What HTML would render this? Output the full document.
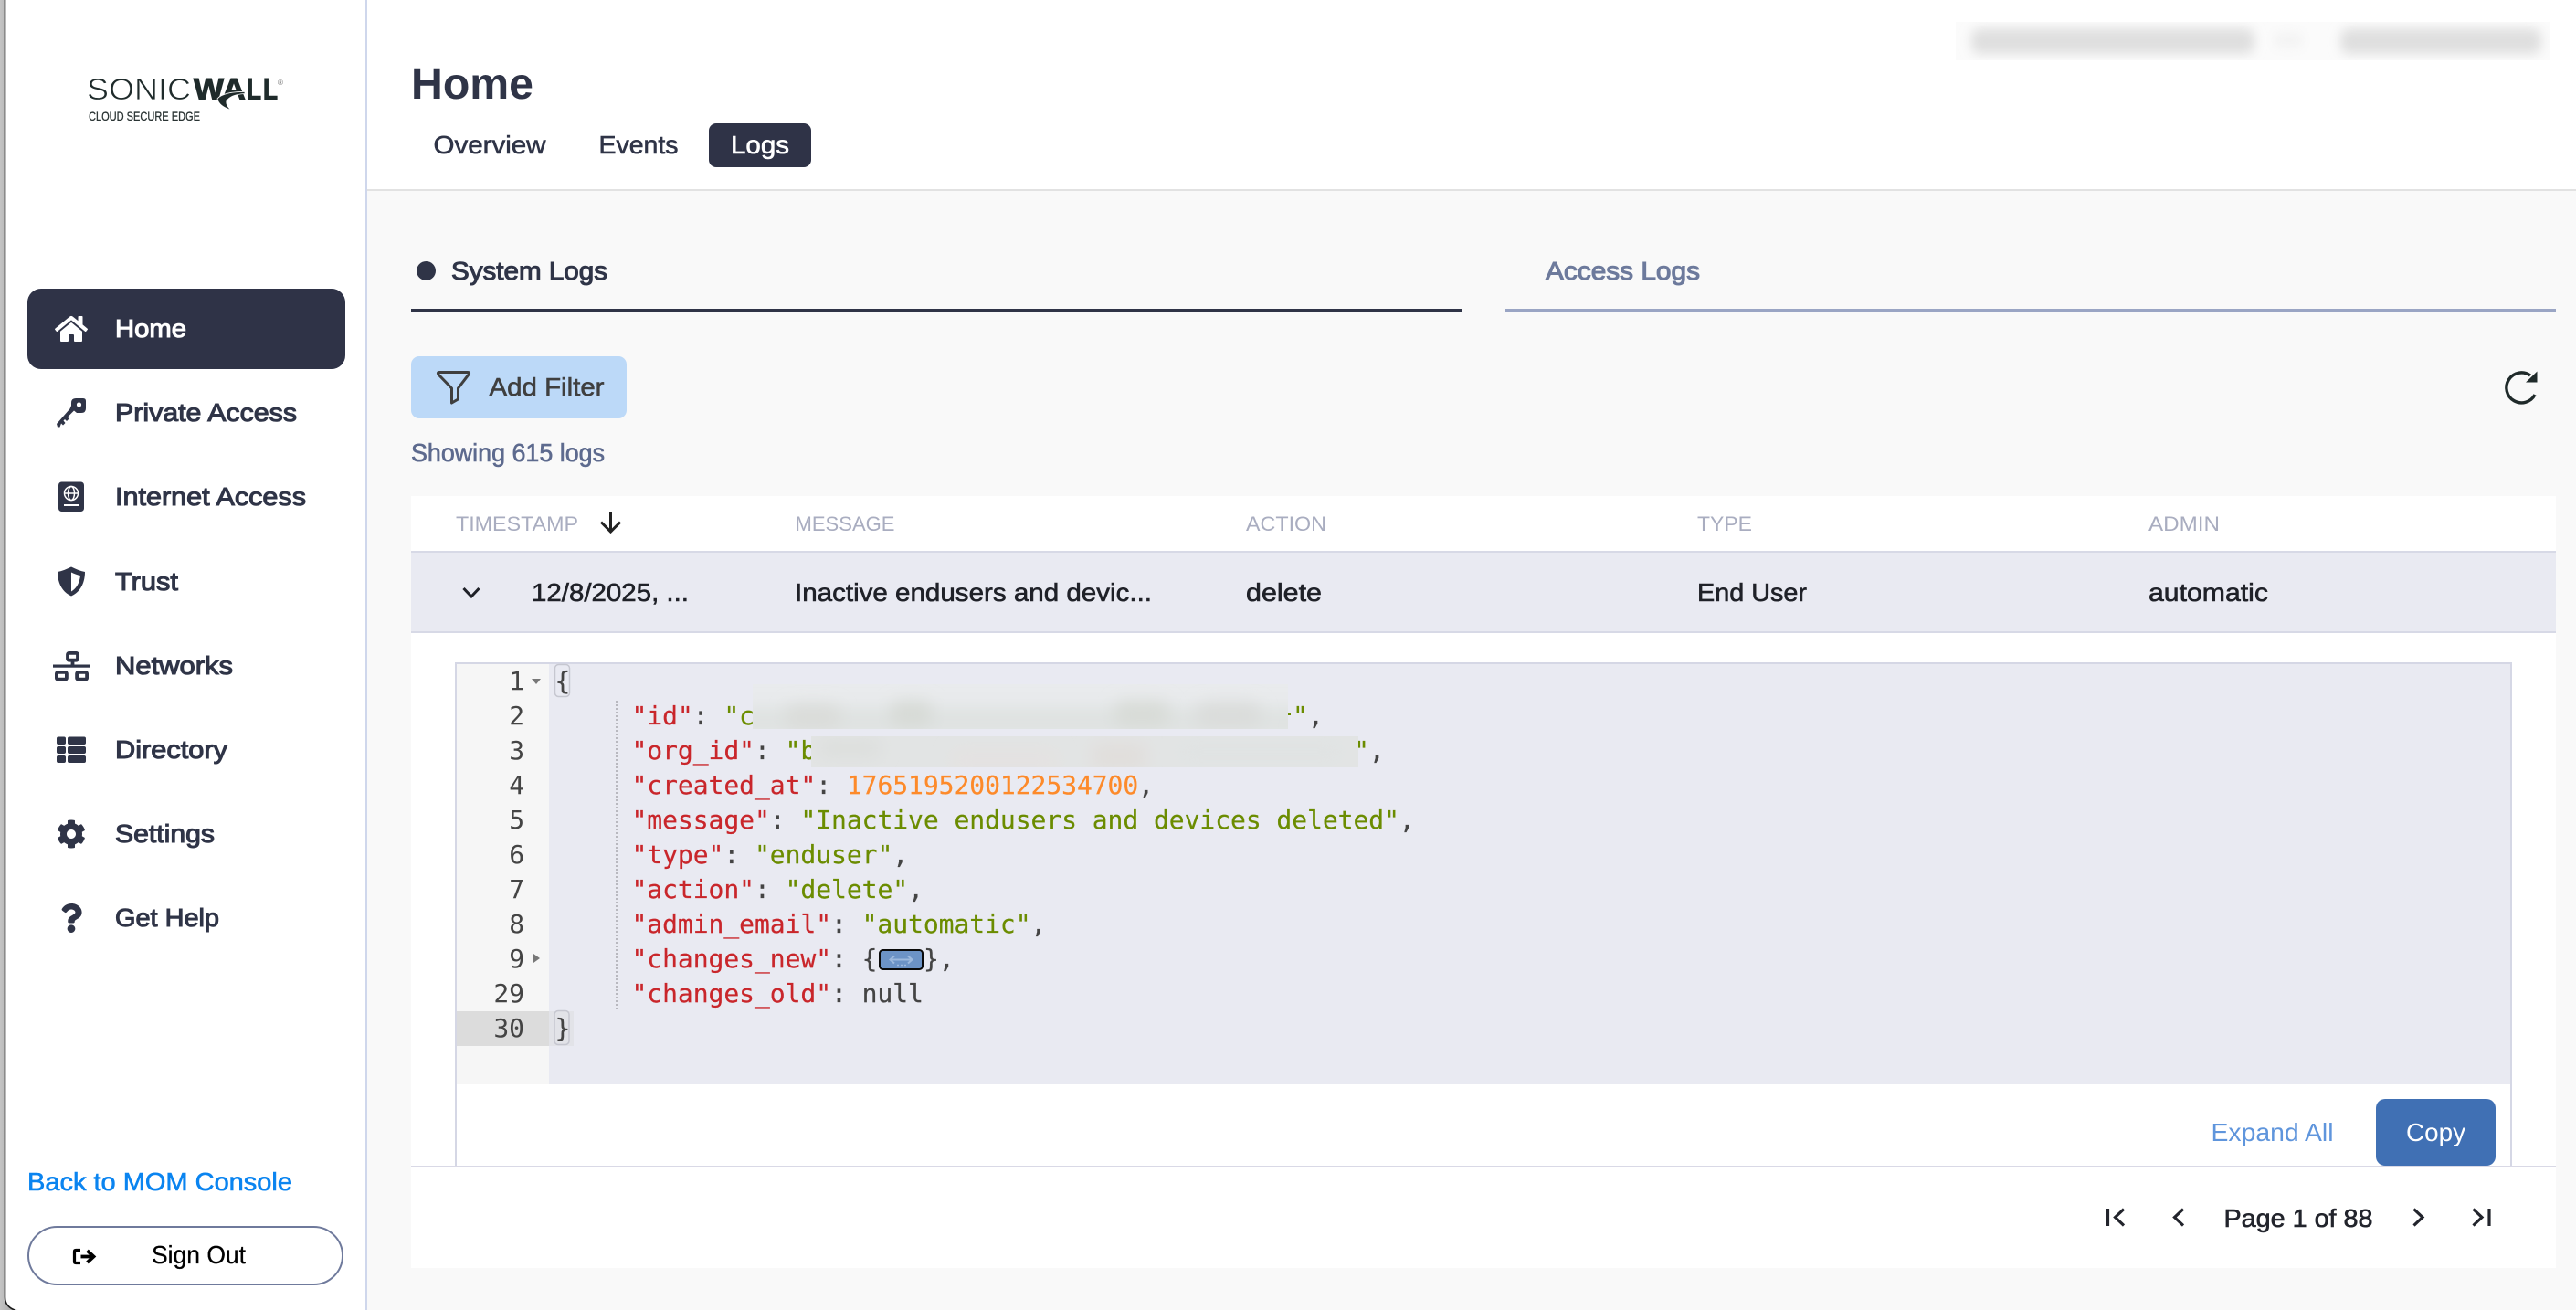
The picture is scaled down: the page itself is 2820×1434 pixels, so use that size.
<!DOCTYPE html>
<html lang="en">
<head>
<meta charset="utf-8">
<title>Home - Logs</title>
<style>
html,body{margin:0;padding:0;background:#f9f9f9;width:2820px;height:1434px;overflow:hidden}
svg{display:block}
text{font-family:"Liberation Sans",Arial,sans-serif;white-space:pre}
.m{stroke-width:.6px;paint-order:stroke}
.s{stroke-width:1.05px;paint-order:stroke}
.nav{font-size:28px;fill:#2f3447;stroke:#2f3447}
.cell{font-size:28px;fill:#1f2128;stroke:#1f2128}
.th{font-size:22px;fill:#a9adc0}
.code text,text.code{font-family:"DejaVu Sans Mono","Liberation Mono",monospace;font-size:28px;letter-spacing:-.05px}
.p{fill:#444;stroke:#444;stroke-width:.2px}
.k{fill:#c9262b;stroke:#c9262b;stroke-width:.2px}
.g{fill:#6b8c00;stroke:#6b8c00;stroke-width:.2px}
.n{fill:#fd8a2a;stroke:#fd8a2a;stroke-width:.2px}
.ln{fill:#444;text-anchor:end}
</style>
</head>
<body>
<svg xmlns="http://www.w3.org/2000/svg" width="2820" height="1434" viewBox="0 0 2820 1434">
<defs>
<filter id="b6" x="-30%" y="-150%" width="160%" height="400%"><feGaussianBlur stdDeviation="6"/></filter>
<filter id="b9" x="-30%" y="-150%" width="160%" height="400%"><feGaussianBlur stdDeviation="9"/></filter>
<linearGradient id="band" x1="0" x2="1" y1="0" y2="0"><stop offset="0" stop-color="#c4c4c4"/><stop offset="1" stop-color="#9e9e9e"/></linearGradient>
</defs>

<!-- page background -->
<rect width="2820" height="1434" fill="#f9f9f9"/>
<!-- header -->
<rect x="402" y="0" width="2418" height="207" fill="#fff"/>
<rect x="402" y="207" width="2418" height="2" fill="#e2e2e2"/>

<!-- sidebar -->
<rect x="0" y="0" width="20" height="1434" fill="url(#band)"/>
<path d="M6 0V1420Q6 1434 20 1434H400V0Z" fill="#fff"/>
<path d="M5.500 0V1420Q5.500 1430 16 1434" fill="none" stroke="#1a1a1a" stroke-width="1.600"/>
<rect x="400" y="0" width="2" height="1434" fill="#cfd7ec"/>

<!-- logo -->
<text x="95" y="109" font-size="33" fill="#1f2b2b" stroke="#fff" stroke-width=".7" textLength="114" lengthAdjust="spacingAndGlyphs">SONIC</text>
<g font-size="33" font-weight="700" fill="#1f2b2b" stroke="#1f2b2b" stroke-width="1.100">
<text x="212" y="109" textLength="33" lengthAdjust="spacingAndGlyphs">W</text>
<text x="243" y="109" textLength="26" lengthAdjust="spacingAndGlyphs">A</text>
<text x="270" y="109" textLength="16" lengthAdjust="spacingAndGlyphs">L</text>
<text x="288" y="109" textLength="16" lengthAdjust="spacingAndGlyphs">L</text>
</g>
<path d="M238 108C242 103 254 100 268 100.500V102.500C258 103 251 106 248 110.500C247 114 249 117 253 120.500C245 118 239 114 238 108Z" fill="#1f2b2b" stroke="#fff" stroke-width=".8"/>
<text x="304" y="93" font-size="8" fill="#666">®</text>
<text x="97" y="132" font-size="14" fill="#2a3333" stroke="#2a3333" stroke-width=".3" textLength="122" lengthAdjust="spacingAndGlyphs">CLOUD SECURE EDGE</text>

<!-- nav -->
<rect x="30" y="316" width="348" height="88" rx="15" fill="#2f3347"/>
<path transform="translate(60 344) scale(.0625)" fill="#fff" d="M280.37 148.26L96 300.11V464a16 16 0 0 0 16 16l112.06-.29a16 16 0 0 0 15.92-16V368a16 16 0 0 1 16-16h64a16 16 0 0 1 16 16v95.64a16 16 0 0 0 16 16.05L464 480a16 16 0 0 0 16-16V300L295.67 148.26a12.19 12.19 0 0 0-15.3 0zM571.6 251.47L488 182.56V44.05a12 12 0 0 0-12-12h-56a12 12 0 0 0-12 12v72.61L318.47 43a48 48 0 0 0-61 0L4.34 251.47a12 12 0 0 0-1.6 16.9l25.5 31A12 12 0 0 0 45.15 301l235.22-193.74a12.19 12.19 0 0 1 15.3 0L530.9 301a12 12 0 0 0 16.9-1.6l25.5-31a12 12 0 0 0-1.7-16.93z"/>
<text x="126" y="369" class="s" font-size="28" fill="#fff" stroke="#fff" textLength="78" lengthAdjust="spacingAndGlyphs">Home</text>

<path fill="#2f3447" d="M83 436H91Q94 436 94 439V447Q94 452 89 452H84L81 449.500L74 456.500L75.500 458.500L73 461L71 459L69.500 460.500L71.500 463L69 465.500L67 463.500L65.500 467.500H63L62 464L76.500 447.500L78 444V441Q78 436 83 436Z"/>
<circle cx="86.500" cy="443" r="2.600" fill="#fff"/>
<text x="126" y="461" class="nav s" textLength="199" lengthAdjust="spacingAndGlyphs">Private Access</text>

<rect x="64" y="527.500" width="28" height="32.500" rx="3.500" fill="#2f3447"/>
<g fill="none" stroke="#fff" stroke-width="1.500"><circle cx="78" cy="540" r="7.500"/><ellipse cx="78" cy="540" rx="3.500" ry="7.500"/><path d="M70.500 540H85.500"/></g>
<rect x="70" y="552" width="16" height="2" fill="#fff"/>
<text x="126" y="553" class="nav s" textLength="209" lengthAdjust="spacingAndGlyphs">Internet Access</text>

<path fill="#2f3447" d="M78 620.500C83 623 88 625 93 626C93 638 88 648 78 652.500C68 648 63 638 63 626C68 625 73 623 78 620.500Z"/>
<path fill="#fff" d="M78 626.500C81 628 85 629.500 88 630C87 638 84 644 78 647.500Z"/>
<text x="126" y="646" class="nav s" textLength="69" lengthAdjust="spacingAndGlyphs">Trust</text>

<g fill="none" stroke="#2f3447" stroke-width="3.800">
<rect x="74" y="714.900" width="11" height="7.800" rx="1.500"/>
<path d="M79.500 723V728"/>
<rect x="61.900" y="735.900" width="11" height="7.800" rx="1.500"/>
<rect x="84.100" y="735.900" width="11" height="7.800" rx="1.500"/>
</g>
<rect x="58" y="727.500" width="40" height="3.200" fill="#2f3447"/>
<text x="126" y="738" class="nav s" textLength="129" lengthAdjust="spacingAndGlyphs">Networks</text>

<g fill="#2f3447">
<rect x="62" y="806.500" width="10" height="8.500" rx="2"/><rect x="62" y="817" width="10" height="8" rx="2"/><rect x="62" y="827" width="10" height="8" rx="2"/>
<rect x="74" y="806.500" width="20" height="8.500" rx="2"/><rect x="74" y="817" width="20" height="8" rx="2"/><rect x="74" y="827" width="20" height="8" rx="2"/>
</g>
<text x="126" y="830" class="nav s" textLength="123" lengthAdjust="spacingAndGlyphs">Directory</text>

<path transform="translate(62 897) scale(.0625)" fill="#2f3447" d="M487.4 315.7l-42.6-24.6c4.3-23.2 4.3-47 0-70.2l42.6-24.6c4.9-2.8 7.1-8.6 5.5-14-11.1-35.6-30-67.8-54.7-94.6-3.8-4.1-10-5.1-14.8-2.3L380.8 110c-17.9-15.4-38.5-27.3-60.8-35.1V25.8c0-5.6-3.9-10.5-9.4-11.7-36.7-8.2-74.3-7.8-109.2 0-5.5 1.2-9.4 6.1-9.4 11.7V75c-22.2 7.9-42.8 19.8-60.8 35.1L88.700 85.500c-4.900-2.800-11-1.900-14.800 2.300-24.700 26.700-43.600 58.900-54.700 94.600-1.700 5.400.6 11.200 5.500 14L67.300 221c-4.300 23.200-4.300 47 0 70.200l-42.600 24.600c-4.900 2.800-7.100 8.600-5.500 14 11.100 35.600 30 67.800 54.700 94.600 3.800 4.100 10 5.100 14.800 2.300l42.600-24.600c17.900 15.400 38.500 27.300 60.800 35.100v49.200c0 5.600 3.900 10.500 9.400 11.700 36.700 8.200 74.300 7.800 109.200 0 5.500-1.200 9.400-6.100 9.400-11.700v-49.200c22.200-7.900 42.800-19.800 60.800-35.100l42.600 24.600c4.900 2.800 11 1.900 14.800-2.300 24.700-26.700 43.600-58.900 54.700-94.600 1.500-5.500-.7-11.300-5.600-14.100zM256 336c-44.100 0-80-35.900-80-80s35.900-80 80-80 80 35.900 80 80-35.900 80-80 80z"/>
<text x="126" y="922" class="nav s" textLength="109" lengthAdjust="spacingAndGlyphs">Settings</text>

<path transform="translate(66 989) scale(.0625)" fill="#2f3447" d="M202.021 0C122.202 0 70.503 32.703 29.914 91.026c-7.363 10.58-5.093 25.086 5.178 32.874l43.138 32.709c10.373 7.865 25.132 6.026 33.253-4.148 25.049-31.381 43.63-49.449 82.757-49.449 30.764 0 68.816 19.799 68.816 49.631 0 22.552-18.617 34.134-48.993 51.164-35.423 19.86-82.299 44.576-82.299 106.405V320c0 13.255 10.745 24 24 24h72.471c13.255 0 24-10.745 24-24v-5.773c0-42.86 125.268-44.645 125.268-160.627C377.504 66.256 286.902 0 202.021 0zM192 373.459c-38.196 0-69.271 31.075-69.271 69.271 0 38.195 31.075 69.27 69.271 69.27s69.271-31.075 69.271-69.271-31.075-69.27-69.271-69.27z"/>
<text x="126" y="1014" class="nav s" textLength="114" lengthAdjust="spacingAndGlyphs">Get Help</text>

<!-- sidebar bottom -->
<text x="30" y="1303" font-size="28" fill="#0a84f0" stroke="#0a84f0" class="m" textLength="290" lengthAdjust="spacingAndGlyphs">Back to MOM Console</text>
<rect x="31" y="1343" width="344" height="63" rx="31.500" fill="#fff" stroke="#6f7a9c" stroke-width="2"/>
<path d="M88 1368.500H83Q81.500 1368.500 81.500 1370V1381Q81.500 1382.500 83 1382.500H88" fill="none" stroke="#000" stroke-width="3.200"/>
<path d="M88.500 1375.500H101M95.500 1369L102.500 1375.500L95.500 1382" fill="none" stroke="#000" stroke-width="3.800"/>
<text x="166" y="1383" font-size="28" fill="#000" stroke="#000" stroke-width=".3" textLength="103" lengthAdjust="spacingAndGlyphs">Sign Out</text>

<!-- header content -->
<text x="450" y="108" font-size="48" font-weight="700" fill="#2f3447" textLength="134" lengthAdjust="spacingAndGlyphs">Home</text>
<text x="474.500" y="168" font-size="28" fill="#2f3447" stroke="#2f3447" class="m" textLength="123" lengthAdjust="spacingAndGlyphs">Overview</text>
<text x="655.500" y="168" font-size="28" fill="#2f3447" stroke="#2f3447" class="m" textLength="87" lengthAdjust="spacingAndGlyphs">Events</text>
<rect x="776" y="135" width="112" height="48" rx="8" fill="#2f3347"/>
<text x="800" y="168" font-size="28" fill="#fff" stroke="#fff" class="m" textLength="64" lengthAdjust="spacingAndGlyphs">Logs</text>

<!-- blurred top right -->
<svg x="2141" y="24" width="651" height="42" viewBox="2141 24 651 42">
<rect x="2141" y="24" width="651" height="42" fill="#fbfbfb"/>
<rect x="2158" y="31" width="310" height="28" rx="10" fill="#dfdfdf" filter="url(#b6)"/>
<rect x="2562" y="31" width="220" height="28" rx="10" fill="#dfdfdf" filter="url(#b6)"/>
<rect x="2490" y="36" width="30" height="16" fill="#f3f3f3" filter="url(#b6)"/>
</svg>

<!-- tabs -->
<circle cx="466.500" cy="296.500" r="10.500" fill="#2f3447"/>
<text x="494" y="306" class="nav s" textLength="171" lengthAdjust="spacingAndGlyphs">System Logs</text>
<rect x="450" y="338" width="1150" height="4" fill="#2f3447"/>
<text x="1692" y="306" font-size="28" fill="#6d7a9c" stroke="#6d7a9c" class="s" textLength="169" lengthAdjust="spacingAndGlyphs">Access Logs</text>
<rect x="1648" y="338" width="1150" height="4" fill="#9aa5c4"/>

<!-- filter -->
<rect x="450" y="390" width="236" height="68" rx="9" fill="#bcd9f8"/>
<path d="M481 407.500H512Q514.500 407.500 513 410L501.500 425V437L494.500 441V425L480 410Q478.500 407.500 481 407.500Z" fill="none" stroke="#3f3f3f" stroke-width="3" stroke-linejoin="round"/>
<text x="535.500" y="433" font-size="28" fill="#3f3f3f" stroke="#3f3f3f" class="m" textLength="126" lengthAdjust="spacingAndGlyphs">Add Filter</text>
<text x="450" y="505" font-size="28" fill="#5d6a8e" stroke="#5d6a8e" class="m" textLength="212" lengthAdjust="spacingAndGlyphs">Showing 615 logs</text>

<!-- refresh -->
<path d="M2775 432A16.500 16.500 0 1 1 2770 411" fill="none" stroke="#1f2a2a" stroke-width="3.400"/>
<path d="M2777.500 406.500V418.500H2765Z" fill="#1f2a2a"/>

<!-- table panel -->
<rect x="450" y="543" width="2348" height="845" fill="#fff"/>
<text x="499" y="581" class="th" textLength="134" lengthAdjust="spacingAndGlyphs">TIMESTAMP</text>
<path d="M668.500 560V582M658 571.500L668.500 582L679 571.500" fill="none" stroke="#222" stroke-width="3"/>
<text x="870.500" y="581" class="th" textLength="109" lengthAdjust="spacingAndGlyphs">MESSAGE</text>
<text x="1364" y="581" class="th" textLength="88" lengthAdjust="spacingAndGlyphs">ACTION</text>
<text x="1858" y="581" class="th" textLength="60" lengthAdjust="spacingAndGlyphs">TYPE</text>
<text x="2352" y="581" class="th" textLength="78" lengthAdjust="spacingAndGlyphs">ADMIN</text>

<rect x="450" y="603" width="2348" height="90" fill="#e9eaf2"/>
<rect x="450" y="603" width="2348" height="2" fill="#d7d9e6"/>
<rect x="450" y="691" width="2348" height="2" fill="#d7d9e6"/>
<path d="M507.500 644L516 653L524.500 644" fill="none" stroke="#1f2128" stroke-width="3"/>
<text x="582" y="658" class="cell m" textLength="172" lengthAdjust="spacingAndGlyphs">12/8/2025, ...</text>
<text x="870" y="658" class="cell m" textLength="391" lengthAdjust="spacingAndGlyphs">Inactive endusers and devic...</text>
<text x="1364" y="658" class="cell m" textLength="83" lengthAdjust="spacingAndGlyphs">delete</text>
<text x="1858" y="658" class="cell m" textLength="120" lengthAdjust="spacingAndGlyphs">End User</text>
<text x="2352" y="658" class="cell m" textLength="131" lengthAdjust="spacingAndGlyphs">automatic</text>

<!-- code box -->
<rect x="498" y="725" width="2" height="551" fill="#d5d7e5"/>
<rect x="498" y="725" width="2252" height="2" fill="#d5d7e5"/>
<rect x="2748" y="725" width="2" height="551" fill="#d5d7e5"/>
<rect x="500" y="727" width="101" height="460" fill="#f6f6f6"/>
<rect x="601" y="727" width="2147" height="460" fill="#e9eaf2"/>
<rect x="500" y="1107" width="101" height="38" fill="#dcdcdc"/>
<rect x="601" y="1107" width="27" height="38" fill="#e2e3e8"/>
<rect x="607.500" y="727.500" width="16" height="35" rx="4" fill="none" stroke="#c6c7d0" stroke-width="1.500"/>
<rect x="607" y="1106.500" width="16" height="37" rx="4" fill="none" stroke="#c6c7d0" stroke-width="1.500"/>
<path d="M675 767V1105" stroke="#a8a8ae" stroke-width="1.500" stroke-dasharray="2 2" fill="none"/>
<path d="M582 743H592L587 749Z" fill="#777"/>
<path d="M584 1044L591 1049L584 1054Z" fill="#777"/>

<g class="code">
<text class="ln" x="574" y="755">1</text>
<text class="ln" x="574" y="793">2</text>
<text class="ln" x="574" y="831">3</text>
<text class="ln" x="574" y="869">4</text>
<text class="ln" x="574" y="907">5</text>
<text class="ln" x="574" y="945">6</text>
<text class="ln" x="574" y="983">7</text>
<text class="ln" x="574" y="1021">8</text>
<text class="ln" x="574" y="1059">9</text>
<text class="ln" x="574" y="1097">29</text>
<text class="ln" x="574" y="1135">30</text>

<text class="p" x="607.500" y="755">{</text>
<text x="691.500" y="793"><tspan class="k">"id"</tspan><tspan class="p">: </tspan><tspan class="g">"c</tspan></text>
<text x="691.500" y="831"><tspan class="k">"org_id"</tspan><tspan class="p">: </tspan><tspan class="g">"b</tspan></text>
<text x="691.500" y="869"><tspan class="k">"created_at"</tspan><tspan class="p">: </tspan><tspan class="n">1765195200122534700</tspan><tspan class="p">,</tspan></text>
<text x="691.500" y="907"><tspan class="k">"message"</tspan><tspan class="p">: </tspan><tspan class="g">"Inactive endusers and devices deleted"</tspan><tspan class="p">,</tspan></text>
<text x="691.500" y="945"><tspan class="k">"type"</tspan><tspan class="p">: </tspan><tspan class="g">"enduser"</tspan><tspan class="p">,</tspan></text>
<text x="691.500" y="983"><tspan class="k">"action"</tspan><tspan class="p">: </tspan><tspan class="g">"delete"</tspan><tspan class="p">,</tspan></text>
<text x="691.500" y="1021"><tspan class="k">"admin_email"</tspan><tspan class="p">: </tspan><tspan class="g">"automatic"</tspan><tspan class="p">,</tspan></text>
<text x="691.500" y="1059"><tspan class="k">"changes_new"</tspan><tspan class="p">: {</tspan></text>
<text class="p" x="1011" y="1059">},</text>
<text x="691.500" y="1097"><tspan class="k">"changes_old"</tspan><tspan class="p">: null</tspan></text>
<text class="p" x="607.500" y="1135">}</text>
<text x="1415" y="793"><tspan class="g">"</tspan><tspan class="p">,</tspan></text>
<text x="1482" y="831"><tspan class="g">"</tspan><tspan class="p">,</tspan></text>
</g>
<rect x="1410" y="781" width="3" height="2" fill="#6b8c00"/>

<!-- fold widget -->
<rect x="963" y="1040" width="47" height="21" rx="3.500" fill="#6c93c6" stroke="#0a0a0a" stroke-width="2"/>
<path d="M975 1050.500H998M979 1046.500L974.500 1050.500L979 1054.500M994 1046.500L998.500 1050.500L994 1054.500" fill="none" stroke="#9db9dd" stroke-width="2"/>
<path d="M982 1056.500H992" stroke="#9db9dd" stroke-width="1.500" stroke-dasharray="2 2"/>

<!-- blurred values -->
<svg x="824" y="749" width="586" height="49" viewBox="824 749 586 49">
<rect x="824" y="749" width="586" height="49" fill="#e9ebed"/>
<rect x="810" y="774" width="620" height="32" fill="#dfe2e1" filter="url(#b9)"/>
<rect x="860" y="772" width="60" height="26" rx="10" fill="#dadcd9" filter="url(#b9)"/>
<rect x="975" y="768" width="45" height="28" rx="10" fill="#d7dad6" filter="url(#b9)"/>
<rect x="1220" y="768" width="60" height="28" rx="10" fill="#d8dbd7" filter="url(#b9)"/>
<rect x="1310" y="770" width="70" height="26" rx="10" fill="#dadcda" filter="url(#b9)"/>
</svg>
<svg x="888" y="806" width="599" height="34" viewBox="888 806 599 34">
<rect x="888" y="806" width="599" height="34" fill="#e2e4e4"/>
<rect x="895" y="808" width="70" height="22" rx="10" fill="#dddfdd" filter="url(#b9)"/>
<rect x="1040" y="820" width="120" height="25" rx="10" fill="#e4e2e1" filter="url(#b9)"/>
<rect x="1195" y="814" width="60" height="28" rx="10" fill="#e1dedb" filter="url(#b9)"/>
<rect x="1290" y="812" width="180" height="22" rx="10" fill="#e0e3e3" filter="url(#b9)"/>
</svg>

<!-- code footer -->
<text x="2420.500" y="1249" font-size="28" fill="#5f95dc" textLength="134" lengthAdjust="spacingAndGlyphs">Expand All</text>
<rect x="2601" y="1203" width="131" height="73" rx="10" fill="#4070b4"/>
<text x="2634" y="1249" font-size="28" fill="#fff" textLength="65" lengthAdjust="spacingAndGlyphs">Copy</text>
<rect x="450" y="1276" width="2348" height="2" fill="#d9d9e6"/>

<!-- pagination -->
<g fill="none" stroke="#22242c" stroke-width="3.200">
<path d="M2307.500 1323V1342M2325 1323.500L2315.500 1332.500L2325 1341.500"/>
<path d="M2390 1323.500L2380.500 1332.500L2390 1341.500"/>
<path d="M2642.500 1323.500L2652 1332.500L2642.500 1341.500"/>
<path d="M2707.500 1323.500L2717 1332.500L2707.500 1341.500M2725 1323V1342"/>
</g>
<text x="2434.500" y="1343" font-size="28" fill="#22242c" stroke="#22242c" class="m" textLength="163" lengthAdjust="spacingAndGlyphs">Page 1 of 88</text>
</svg>
</body>
</html>
